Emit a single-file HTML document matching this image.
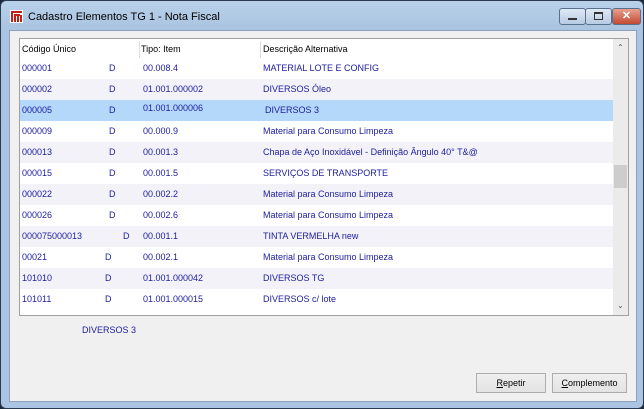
<!DOCTYPE html><html><head><style>
body{margin:0;width:644px;height:409px;overflow:hidden;background:#1c2a3e;font-family:"Liberation Sans",sans-serif;}
.win{position:absolute;left:0;top:0;width:642px;height:407px;border:1px solid #2a3a50;border-radius:6px;background:linear-gradient(#b9d1ea,#a9c3e0 30px,#aac4e2);}
.title{position:absolute;left:27px;top:10px;font-size:11px;color:#000;}
.client{position:absolute;left:8px;top:29px;width:626px;height:370px;background:#f0f0f0;border:1px solid #8aa2c0;}
.list{position:absolute;left:9px;top:7px;width:608px;height:276px;background:#fff;border:1px solid #a0a0a0;overflow:hidden;}
.row{position:absolute;left:0;width:593px;height:21px;font-size:9px;color:#2020a0;line-height:21px;}
.row span{position:absolute;white-space:nowrap;}
.sb{position:absolute;right:0;top:0;width:15px;height:276px;background:#ebebeb;}
.btn{position:absolute;top:342px;height:18px;border:1px solid #adadad;background:linear-gradient(#efefef,#e3e3e3);font-size:9px;text-align:center;line-height:18px;}
.cb{position:absolute;top:7px;height:15px;border:1px solid #5a6f8a;border-radius:3px;}
</style></head><body><div class="win">
<svg style="position:absolute;left:9px;top:9px" width="13" height="13"><rect width="13" height="13" fill="#fff"/><path d="M1 2h11M2 2v10M5 4v8M8 4v8M11 5v7M4 5h6" stroke="#c0201a" stroke-width="2"/></svg>
<div class="title">Cadastro Elementos TG 1 - Nota Fiscal</div>
<div class="cb" style="left:558px;width:25px;background:linear-gradient(#dfe9f5,#b7cbe3)"><div style="position:absolute;left:8px;top:9px;width:9px;height:2px;background:#333"></div></div>
<div class="cb" style="left:584px;width:25px;background:linear-gradient(#dfe9f5,#b7cbe3)"><div style="position:absolute;left:8px;top:3px;width:7px;height:5px;border:1px solid #333;border-top-width:2px"></div></div>
<div class="cb" style="left:611px;width:27px;background:linear-gradient(#e8a090,#c24a30);color:#fff;font-size:11px;text-align:center;line-height:15px;font-weight:bold">✕</div>
<div class="client">
<div class="list">
<div class="row" style="top:0;color:#000;background:#fff"><span style="left:2px">Código Único</span><span style="left:121px">Tipo: Item</span><span style="left:243px">Descrição Alternativa</span><div style="position:absolute;left:119px;top:2px;width:1px;height:17px;background:#ddd"></div><div style="position:absolute;left:240px;top:2px;width:1px;height:17px;background:#ddd"></div></div>
<div class="row" style="top:19px;background:#fff"><span style="left:2px">000001</span><span style="left:89px">D</span><span style="left:123px">00.008.4</span><span style="left:243px">MATERIAL LOTE E CONFIG</span></div>
<div class="row" style="top:40px;background:#f2f2f8"><span style="left:2px">000002</span><span style="left:89px">D</span><span style="left:123px">01.001.000002</span><span style="left:243px">DIVERSOS Óleo</span></div>
<div class="row" style="top:61px;background:#b3d8fa"><span style="left:2px">000005</span><span style="left:89px">D</span><span style="left:123px;top:-2px">01.001.000006</span><span style="left:245px">DIVERSOS 3</span></div>
<div class="row" style="top:82px;background:#fff"><span style="left:2px">000009</span><span style="left:89px">D</span><span style="left:123px">00.000.9</span><span style="left:243px">Material para Consumo Limpeza</span></div>
<div class="row" style="top:103px;background:#f2f2f8"><span style="left:2px">000013</span><span style="left:89px">D</span><span style="left:123px">00.001.3</span><span style="left:243px">Chapa de Aço Inoxidável - Definição Ângulo 40° T&amp;@</span></div>
<div class="row" style="top:124px;background:#fff"><span style="left:2px">000015</span><span style="left:89px">D</span><span style="left:123px">00.001.5</span><span style="left:243px">SERVIÇOS DE TRANSPORTE</span></div>
<div class="row" style="top:145px;background:#f2f2f8"><span style="left:2px">000022</span><span style="left:89px">D</span><span style="left:123px">00.002.2</span><span style="left:243px">Material para Consumo Limpeza</span></div>
<div class="row" style="top:166px;background:#fff"><span style="left:2px">000026</span><span style="left:89px">D</span><span style="left:123px">00.002.6</span><span style="left:243px">Material para Consumo Limpeza</span></div>
<div class="row" style="top:187px;background:#f2f2f8"><span style="left:2px">000075000013</span><span style="left:103px">D</span><span style="left:123px">00.001.1</span><span style="left:243px">TINTA VERMELHA new</span></div>
<div class="row" style="top:208px;background:#fff"><span style="left:2px">00021</span><span style="left:85px">D</span><span style="left:123px">00.002.1</span><span style="left:243px">Material para Consumo Limpeza</span></div>
<div class="row" style="top:229px;background:#f2f2f8"><span style="left:2px">101010</span><span style="left:85px">D</span><span style="left:123px">01.001.000042</span><span style="left:243px">DIVERSOS TG</span></div>
<div class="row" style="top:250px;background:#fff"><span style="left:2px">101011</span><span style="left:85px">D</span><span style="left:123px">01.001.000015</span><span style="left:243px">DIVERSOS c/ lote</span></div>
<div class="sb"><div style="position:absolute;left:4px;top:4px;font-size:8px;color:#555">⌃</div><div style="position:absolute;left:1px;top:126px;width:13px;height:23px;background:#cdcdcd"></div><div style="position:absolute;left:4px;top:262px;font-size:8px;color:#555">⌄</div></div>
</div>
<div style="position:absolute;left:72px;top:294px;font-size:9px;color:#2020a0">DIVERSOS 3</div>
<div class="btn" style="left:466px;width:68px"><u>R</u>epetir</div>
<div class="btn" style="left:542px;width:73px"><u>C</u>omplemento</div>
</div></div></body></html>
